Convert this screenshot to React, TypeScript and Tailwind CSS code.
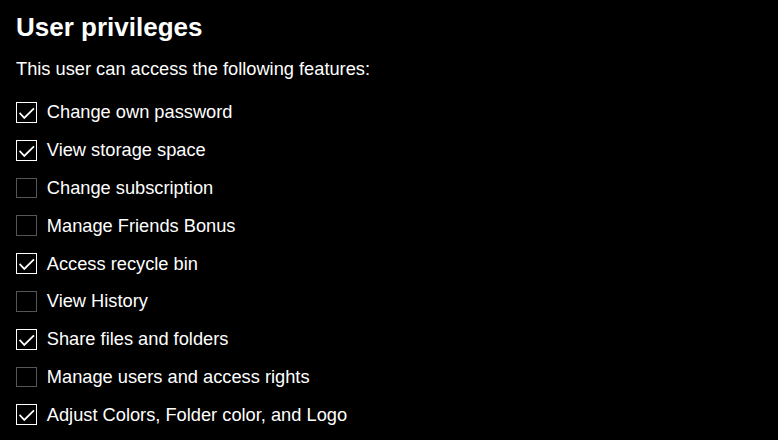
import React from "react";

const items: { label: string; checked: boolean }[] = [
  { label: "Change own password", checked: true },
  { label: "View storage space", checked: true },
  { label: "Change subscription", checked: false },
  { label: "Manage Friends Bonus", checked: false },
  { label: "Access recycle bin", checked: true },
  { label: "View History", checked: false },
  { label: "Share files and folders", checked: true },
  { label: "Manage users and access rights", checked: false },
  { label: "Adjust Colors, Folder color, and Logo", checked: true },
];

function Box({ checked }: { checked: boolean }) {
  return (
    <span
      className={
        checked
          ? "relative flex h-[20.8px] w-[20.8px] shrink-0 items-center justify-center border border-white"
          : "relative flex h-[20.8px] w-[20.8px] shrink-0 items-center justify-center border border-[#555555]"
      }
    >
      {checked && (
        <svg
          className="absolute left-[-1px] top-[-1px]"
          width="21"
          height="21"
          viewBox="0 0 21 21"
          fill="none"
        >
          <polyline
            points="4.2,11.6 8.3,15.9 17.3,7"
            stroke="white"
            strokeWidth="1.8"
            strokeLinecap="square"
            strokeLinejoin="miter"
          />
        </svg>
      )}
    </span>
  );
}

export default function App() {
  return (
    <div
      className="min-h-[440px] w-full bg-black px-4 pt-[12px] text-white"
      style={{ fontFamily: '"Liberation Sans", Arial, sans-serif' }}
    >
      <h2 className="text-[26px] font-bold leading-[30px]">User privileges</h2>
      <p className="mt-[15px] text-[18.25px] leading-[24px]">
        This user can access the following features:
      </p>
      <div className="mt-[21px] flex flex-col gap-[17px]">
        {items.map((it) => (
          <label key={it.label} className="flex h-[20.8px] items-center gap-[10px]">
            <Box checked={it.checked} />
            <span className="text-[18.25px] leading-[24px]">{it.label}</span>
          </label>
        ))}
      </div>
    </div>
  );
}
